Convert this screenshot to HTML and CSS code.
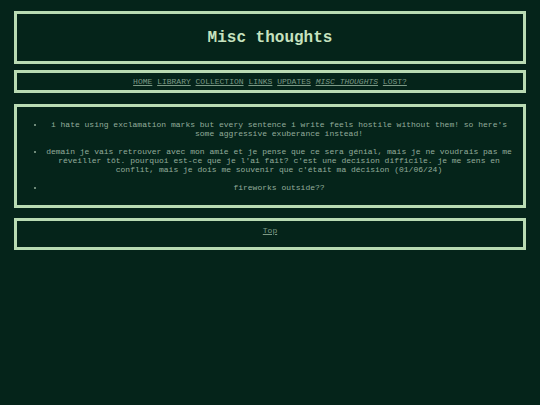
FILE: index.html
```html
<!DOCTYPE html>
<html>
<head>
<meta charset="utf-8">
<link rel="stylesheet" href="styles.css">
</head>
<body>
<header class="box title-box">
  <h1 class="title">Misc thoughts</h1>
</header>
<nav class="box nav-box">
  <a href="#">HOME</a> <a href="#">LIBRARY</a> <a href="#">COLLECTION</a> <a href="#">LINKS</a> <a href="#">UPDATES</a> <a href="#" class="current">MISC THOUGHTS</a> <a href="#">LOST?</a>
</nav>
<main class="box list-box">
  <ul class="thoughts">
    <li>i hate using exclamation marks but every sentence i write feels hostile without them! so here's some aggressive exuberance instead!</li>
    <li>demain je vais retrouver avec mon amie et je pense que ce sera génial, mais je ne voudrais pas me réveiller tôt. pourquoi est-ce que je l'ai fait? c'est une decision difficile. je me sens en conflit, mais je dois me souvenir que c'était ma décision (01/06/24)</li>
    <li>fireworks outside??</li>
  </ul>
</main>
<footer class="box foot-box">
  <a href="#">Top</a>
</footer>
</body>
</html>
```
FILE: styles.css
```css
html, body {
  background: #05241a;
}
body {
  margin: 0;
  padding: 11px 14px;
  font-family: "Liberation Mono", "Courier New", monospace;
  color: #93ac9a;
}
.box {
  border: 3px solid #b9dbb3;
  text-align: center;
}
.title-box {
  padding: 14px 0 13px;
}
.title {
  margin: 0;
  font-size: 16px;
  line-height: 20px;
  font-weight: bold;
  color: #c6e2bf;
}
.nav-box {
  margin-top: 6px;
  padding: 4px 0;
  font-size: 8px;
  line-height: 9px;
}
.nav-box a, .foot-box a {
  color: #7c9a86;
  text-decoration: underline;
}
.nav-box a.current {
  font-style: italic;
}
.list-box {
  margin-top: 11px;
  padding: 13px 10px;
}
.thoughts {
  margin: 0;
  padding: 0 0 0 18px;
  font-size: 8px;
  line-height: 9px;
}
.thoughts li + li {
  margin-top: 9px;
}
.foot-box {
  margin-top: 10px;
  padding: 5px 0 12px;
  font-size: 8px;
  line-height: 9px;
}
```
